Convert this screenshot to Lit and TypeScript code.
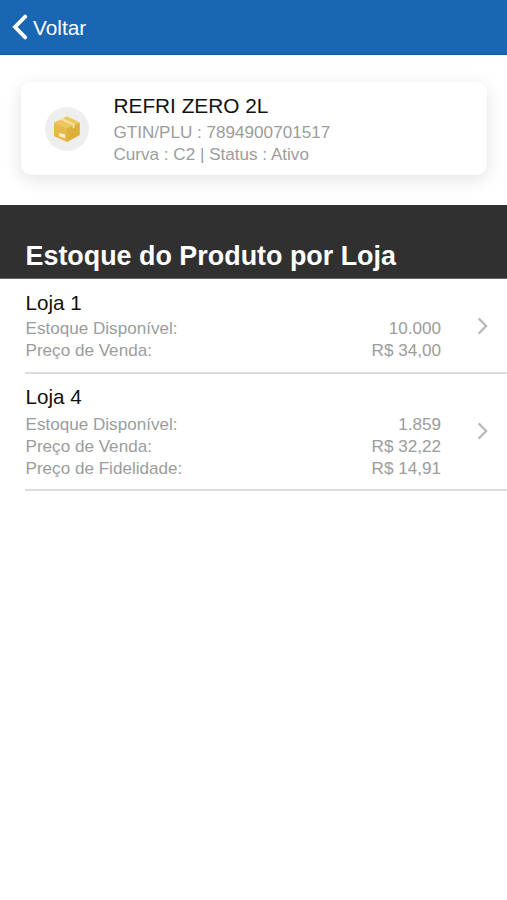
import { LitElement, html, css, svg } from "lit";
import { customElement, property } from "lit/decorators.js";

interface Store {
  name: string;
  rows: [string, string][];
}

const stores: Store[] = [
  {
    name: "Loja 1",
    rows: [
      ["Estoque Disponível:", "10.000"],
      ["Preço de Venda:", "R$ 34,00"],
    ],
  },
  {
    name: "Loja 4",
    rows: [
      ["Estoque Disponível:", "1.859"],
      ["Preço de Venda:", "R$ 32,22"],
      ["Preço de Fidelidade:", "R$ 14,91"],
    ],
  },
];

const box = svg`
  <path d="M14 1.2 L26.8 7.4 L14 13.6 L1 7.4 Z" fill="#edc75e" />
  <path d="M1 7.4 L14 13.2 V27 L1.6 21.4 Q1 21.1 1 20.4 Z" fill="#e5ba4a" />
  <path d="M26.8 7.4 L14 13.2 V27 L26.2 20.6 Q26.8 20.3 26.8 19.6 Z" fill="#dfaf3c" />
  <path d="M7.2 4.5 L9.7 3.3 L21.6 9 V12.4 L19.6 13.2 V10 Z" fill="#f8e3a0" />
  <path d="M6.2 17.9 L12 19.6 V23 L6.2 21.2 Z" fill="#fbf1cf" />`;

@customElement("store-item")
export class StoreItem extends LitElement {
  @property({ attribute: false }) store!: Store;

  static styles = css`
    :host {
      display: flex;
      align-items: center;
      box-sizing: border-box;
      margin-left: 25px;
      padding: 9.6px 19px 9.7px 0;
      border-bottom: 2px solid #dcdcdc;
    }
    .info {
      flex: 1;
      padding-left: 0.5px;
    }
    .name {
      margin-bottom: 1.5px;
      font-size: 20.6px;
      line-height: 28px;
      color: #111;
    }
    :host(:last-of-type) {
      padding-top: 9.1px;
    }
    :host(:last-of-type) .name {
      margin-bottom: 2.5px;
    }
    .row {
      display: flex;
      justify-content: space-between;
      font-size: 17.1px;
      line-height: 22px;
      color: #9c9c9c;
    }
    .chevron {
      width: 11px;
      height: 18px;
      margin-left: 36px;
    }
  `;

  render() {
    return html`
      <div class="info">
        <div class="name">${this.store.name}</div>
        ${this.store.rows.map(
          ([label, value]) => html`<div class="row"><span>${label}</span><span>${value}</span></div>`
        )}
      </div>
      <svg class="chevron" viewBox="0 0 11 18">
        <path d="M1.6 1.4 L9.2 9 L1.6 16.6" fill="none" stroke="#b9b9b9" stroke-width="2.2" />
      </svg>
    `;
  }
}

@customElement("app-root")
export class AppRoot extends LitElement {
  static styles = css`
    :host {
      display: block;
      min-height: 900px;
      background: #fff;
      font-family: "Liberation Sans", Arial, sans-serif;
    }
    .bar {
      display: flex;
      align-items: center;
      box-sizing: border-box;
      height: 54.5px;
      padding-left: 12px;
      background: #1966b2;
      border-bottom: 1px solid #175a9c;
      color: #fff;
      font-size: 20.8px;
    }
    .back {
      width: 16px;
      height: 26px;
      margin-right: 5px;
    }
    .label {
      padding-top: 2px;
    }
    .card {
      display: flex;
      align-items: center;
      box-sizing: border-box;
      height: 93px;
      margin: 27.7px 20px 29.5px 21px;
      padding-left: 24px;
      border-radius: 10px;
      background: #fff;
      box-shadow: 0 4px 18px rgba(0, 0, 0, 0.12);
    }
    .avatar {
      display: flex;
      align-items: center;
      justify-content: center;
      width: 44px;
      height: 44px;
      margin-right: 24.5px;
      border-radius: 50%;
      background: #eee;
    }
    .box {
      width: 28px;
      height: 28px;
    }
    .summary {
      padding-top: 1px;
    }
    .title {
      margin-bottom: 2px;
      font-size: 20.8px;
      line-height: 28px;
      color: #111;
    }
    .detail {
      font-size: 17.1px;
      line-height: 22px;
      color: #9c9c9c;
    }
    .heading {
      display: flex;
      align-items: flex-end;
      box-sizing: border-box;
      height: 74.6px;
      margin: 0;
      padding: 0 25.5px 6.5px;
      background: #303030;
      border-bottom: 1px solid #666;
      color: #fff;
      font-size: 26.9px;
      line-height: 31px;
      font-weight: 700;
    }
  `;

  render() {
    return html`
      <header class="bar">
        <svg class="back" viewBox="0 0 16 26">
          <path d="M13.2 2.6 L3 13 L13.2 23.4" fill="none" stroke="#fff" stroke-width="3.8" stroke-linecap="round" />
        </svg>
        <span class="label">Voltar</span>
      </header>
      <section class="card">
        <div class="avatar"><svg class="box" viewBox="0 0 28 28">${box}</svg></div>
        <div class="summary">
          <div class="title">REFRI ZERO 2L</div>
          <div class="detail">GTIN/PLU : 7894900701517</div>
          <div class="detail">Curva : C2 | Status : Ativo</div>
        </div>
      </section>
      <h1 class="heading">Estoque do Produto por Loja</h1>
      ${stores.map((store) => html`<store-item .store=${store}></store-item>`)}
    `;
  }
}
